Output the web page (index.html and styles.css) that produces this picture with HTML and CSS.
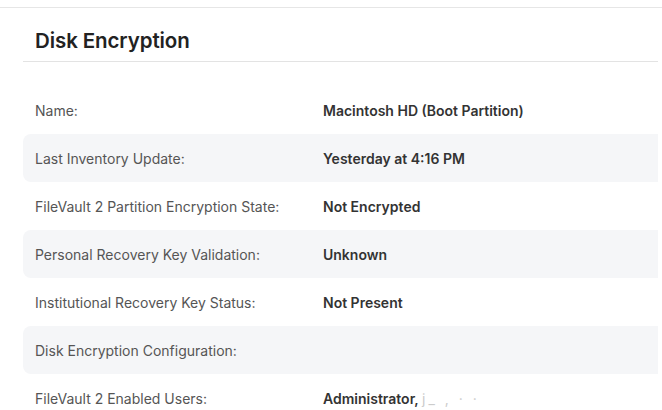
FILE: index.html
```html
<!DOCTYPE html>
<html lang="en">
<head>
    <meta charset="UTF-8">
    <meta name="viewport" content="width=device-width, initial-scale=1.0">
    <title>Disk Encryption</title>
    <link rel="stylesheet" href="styles.css">
</head>
<body>
    <div class="topbar"></div>

    <div class="panel">
        <div class="panel-header">
            <h2>Disk Encryption</h2>
        </div>

        <div class="rows">
            <div class="row">
                <div class="label">Name:</div>
                <div class="value">Macintosh HD (Boot Partition)</div>
            </div>
            <div class="row">
                <div class="label">Last Inventory Update:</div>
                <div class="value">Yesterday at 4:16 PM</div>
            </div>
            <div class="row">
                <div class="label">FileVault 2 Partition Encryption State:</div>
                <div class="value">Not Encrypted</div>
            </div>
            <div class="row">
                <div class="label">Personal Recovery Key Validation:</div>
                <div class="value">Unknown</div>
            </div>
            <div class="row">
                <div class="label">Institutional Recovery Key Status:</div>
                <div class="value">Not Present</div>
            </div>
            <div class="row">
                <div class="label">Disk Encryption Configuration:</div>
                <div class="value"></div>
            </div>
            <div class="row">
                <div class="label">FileVault 2 Enabled Users:</div>
                <div class="value">Administrator, <span class="blurred">j_ ,  ·  ·</span></div>
            </div>
        </div>
    </div>
</body>
</html>
```

FILE: styles.css
```css
body { margin: 0; background: #fff; font-family: Inter, "Noto Sans", sans-serif; overflow: hidden; }
.topbar { height: 7px; border-bottom: 1px solid #e6e6e6; }
.panel { margin-left: 23px; margin-right: 4px; }
.panel-header { height: 54px; border-bottom: 1px solid #e3e3e3; padding-left: 12px; display: flex; align-items: center; box-sizing: border-box; padding-top: 12px; }
.panel-header h2 { margin: 0; font-size: 20.5px; font-weight: 600; color: #222; letter-spacing: -0.1px; }
.rows { padding-top: 24px; }
.row { display: flex; align-items: center; height: 48px; padding-left: 12px; border-radius: 8px 0 0 8px; font-size: 14px; }
.row:nth-child(even) { background: #f5f6f8; }
.label { width: 288px; color: #555; }
.value { color: #333; font-weight: 600; }
.blurred { color: #ccc; font-weight: 400; letter-spacing: 3px; }
```
